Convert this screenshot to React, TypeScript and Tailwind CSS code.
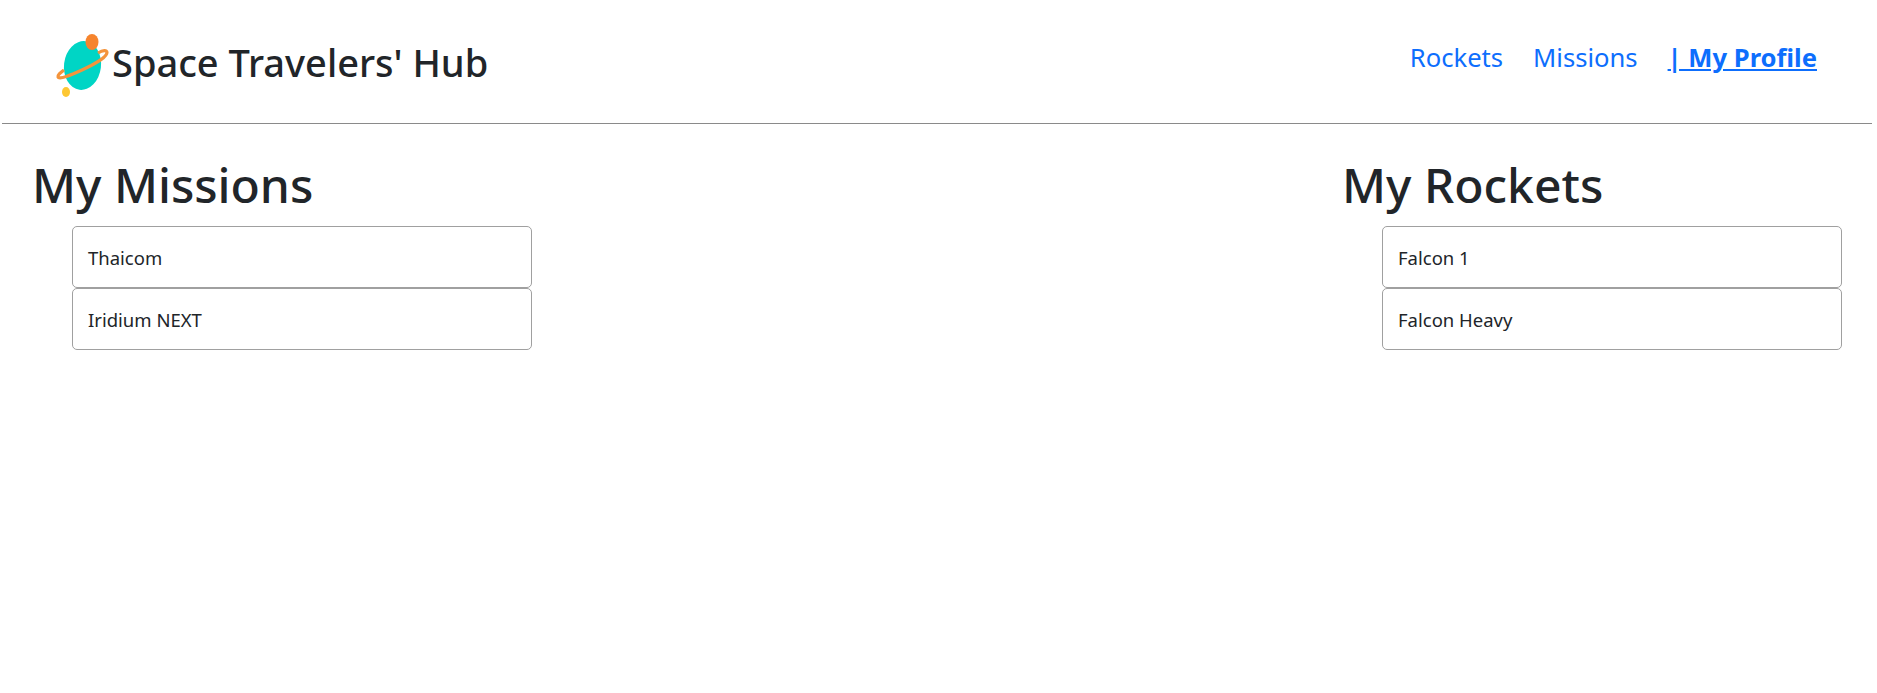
const missions = ['Thaicom', 'Iridium NEXT'];
const rockets = ['Falcon 1', 'Falcon Heavy'];

function Logo() {
  return (
    <svg width="54" height="70" viewBox="0 0 54 70" className="shrink-0">
      <ellipse cx="27.500" cy="36.500" rx="18.500" ry="24.500" fill="#00d5c5" transform="rotate(7 27.500 36.500)" />
      <path
        d="M43 24C48 21 52 21 52 23.500C52 28 38 36 27 41C16 46 4 51 3 48C2.500 46 5 44 9 41"
        fill="none"
        stroke="#f4943c"
        strokeWidth="3.200"
      />
      <ellipse cx="37" cy="13" rx="6.500" ry="8" fill="#f6842d" />
      <ellipse cx="11" cy="63" rx="4" ry="5" fill="#fdc733" />
    </svg>
  );
}

function ProfileList({ title, items }: { title: string; items: string[] }) {
  return (
    <section className="w-[500px]">
      <h2 className="text-[48px] leading-[58px] font-medium text-[#212529] mb-[12px]">{title}</h2>
      <ul className="ml-10 w-[460px]">
        {items.map((item) => (
          <li
            key={item}
            className="h-[62px] flex items-center pl-[15px] pr-4 pt-[1px] border border-[#a0a0a0] rounded-[5px] bg-white text-[#212529] text-[18.500px]"
          >
            {item}
          </li>
        ))}
      </ul>
    </section>
  );
}

export default function App() {
  return (
    <div className="min-h-[693px] bg-white font-['Noto_Sans','Open_Sans',sans-serif]">
      <header className="ml-[2px] mr-[5px] h-[124px] border-b border-[#8a8a8a] flex items-start justify-between pl-[53px] pr-[55px]">
        <div className="flex items-center gap-[3px] mt-[29px]">
          <Logo />
          <h1 className="text-[38px] leading-[56px] font-medium text-[#212529] mt-[-4px]">Space Travelers&apos; Hub</h1>
        </div>
        <nav className="flex items-center gap-[30px] mt-[39px] text-[25.600px] leading-[38px] text-[#0d6efd]">
          <a href="#rockets">Rockets</a>
          <a href="#missions">Missions</a>
          <a href="#profile" className="font-bold underline">| My Profile</a>
        </nav>
      </header>
      <main className="flex justify-between pl-[32px] pr-[35px] pt-[32px]">
        <ProfileList title="My Missions" items={missions} />
        <ProfileList title="My Rockets" items={rockets} />
      </main>
    </div>
  );
}
